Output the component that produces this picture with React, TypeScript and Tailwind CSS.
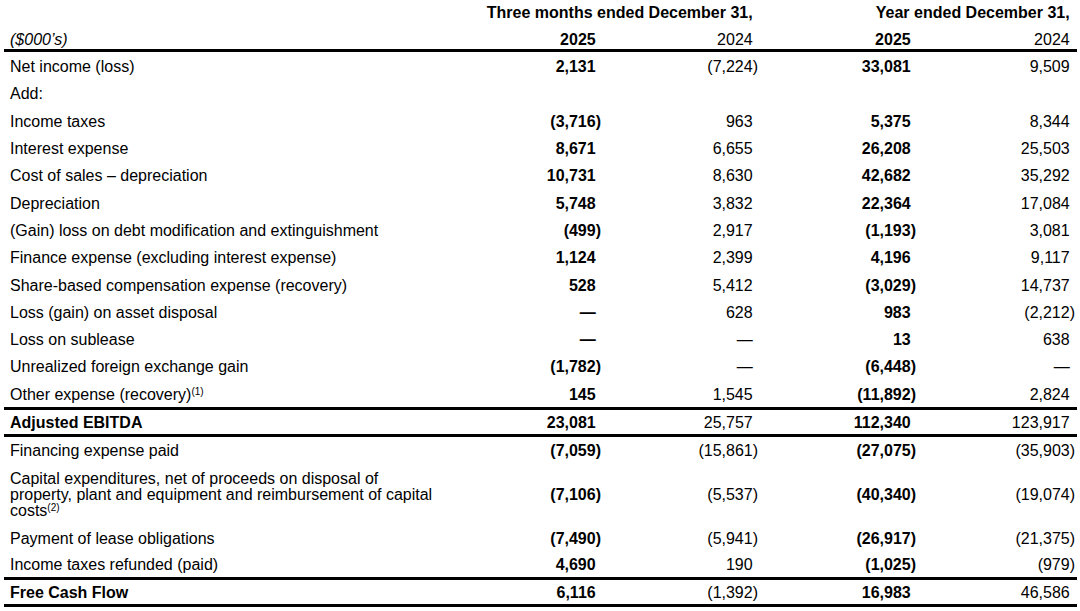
import React from 'react'

type Row = {
  label: React.ReactNode
  values?: string[]
  h: string
  bold?: boolean
}

const Sup = ({ n }: { n: number }) => (
  <span className="text-[10px] leading-none align-[5px]">({n})</span>
)

const rows: Row[] = [
  { label: 'Net income (loss)', values: ['2,131', '(7,224)', '33,081', '9,509'], h: 'h-[27.3px]' },
  { label: 'Add:', h: 'h-[27.3px]' },
  { label: 'Income taxes', values: ['(3,716)', '963', '5,375', '8,344'], h: 'h-[27.3px]' },
  { label: 'Interest expense', values: ['8,671', '6,655', '26,208', '25,503'], h: 'h-[27.3px]' },
  { label: 'Cost of sales – depreciation', values: ['10,731', '8,630', '42,682', '35,292'], h: 'h-[27.3px]' },
  { label: 'Depreciation', values: ['5,748', '3,832', '22,364', '17,084'], h: 'h-[27.3px]' },
  { label: '(Gain) loss on debt modification and extinguishment', values: ['(499)', '2,917', '(1,193)', '3,081'], h: 'h-[27.3px]' },
  { label: 'Finance expense (excluding interest expense)', values: ['1,124', '2,399', '4,196', '9,117'], h: 'h-[27.3px]' },
  { label: 'Share-based compensation expense (recovery)', values: ['528', '5,412', '(3,029)', '14,737'], h: 'h-[27.3px]' },
  { label: 'Loss (gain) on asset disposal', values: ['—', '628', '983', '(2,212)'], h: 'h-[27.3px]' },
  { label: 'Loss on sublease', values: ['—', '—', '13', '638'], h: 'h-[27.3px]' },
  { label: 'Unrealized foreign exchange gain', values: ['(1,782)', '—', '(6,448)', '—'], h: 'h-[27.3px]' },
  {
    label: (
      <>
        Other expense (recovery)
        <Sup n={1} />
      </>
    ),
    values: ['145', '1,545', '(11,892)', '2,824'],
    h: 'h-[27.3px]',
  },
]

const middle: Row[] = [
  { label: 'Financing expense paid', values: ['(7,059)', '(15,861)', '(27,075)', '(35,903)'], h: 'h-[26px]' },
  {
    label: (
      <div className="w-[436px] leading-[16px]">
        Capital expenditures, net of proceeds on disposal of
        <br />
        property, plant and equipment and reimbursement of capital costs
        <Sup n={2} />
      </div>
    ),
    values: ['(7,106)', '(5,537)', '(40,340)', '(19,074)'],
    h: 'h-[61px]',
  },
  { label: 'Payment of lease obligations', values: ['(7,490)', '(5,941)', '(26,917)', '(21,375)'], h: 'h-[27px]' },
  { label: 'Income taxes refunded (paid)', values: ['4,690', '190', '(1,025)', '(979)'], h: 'h-[26px]' },
]

const cols = 'grid grid-cols-[456px_143px_157px_158px_159px] items-center'

function Num({ v, bold }: { v: string; bold: boolean }) {
  const neg = v.startsWith('(')
  return (
    <div className={`text-right pr-[2px] ${bold ? 'font-bold' : ''}`}>
      {v}
      {!neg && <span className="invisible">)</span>}
    </div>
  )
}

function TableRow({ row }: { row: Row }) {
  return (
    <div className={`${cols} ${row.h} pt-[3px]`}>
      <div className={`pl-[6px] ${row.bold ? 'font-bold' : ''}`}>{row.label}</div>
      {row.values?.map((v, i) => (
        <Num key={i} v={v} bold={i % 2 === 0} />
      ))}
    </div>
  )
}

const Rule = () => <div className="h-[3px] bg-black" />

export default function App() {
  return (
    <div className="w-[1080px] h-[611px] bg-white text-black overflow-hidden font-['Liberation_Sans',Arial,sans-serif] text-[16px] leading-[18px]">
      <div className="ml-[4px] w-[1073px]">
        <div className="grid grid-cols-[456px_300px_317px] h-[24px] items-center pt-[2px] font-bold">
          <div />
          <div className="text-right pr-[2px]">
            Three months ended December 31,<span className="invisible">)</span>
          </div>
          <div className="text-right pr-[2px]">
            Year ended December 31,<span className="invisible">)</span>
          </div>
        </div>
        <div className={`${cols} h-[25px] !items-end`}>
          <div className="pl-[6px] italic">($000’s)</div>
          <Num v="2025" bold />
          <Num v="2024" bold={false} />
          <Num v="2025" bold />
          <Num v="2024" bold={false} />
        </div>
        <Rule />
        {rows.map((r, i) => (
          <TableRow key={i} row={r} />
        ))}
        <Rule />
        <TableRow
          row={{ label: 'Adjusted EBITDA', values: ['23,081', '25,757', '112,340', '123,917'], h: 'h-[24px]', bold: true }}
        />
        <Rule />
        {middle.map((r, i) => (
          <TableRow key={i} row={r} />
        ))}
        <Rule />
        <TableRow
          row={{ label: 'Free Cash Flow', values: ['6,116', '(1,392)', '16,983', '46,586'], h: 'h-[24px]', bold: true }}
        />
        <Rule />
      </div>
    </div>
  )
}
